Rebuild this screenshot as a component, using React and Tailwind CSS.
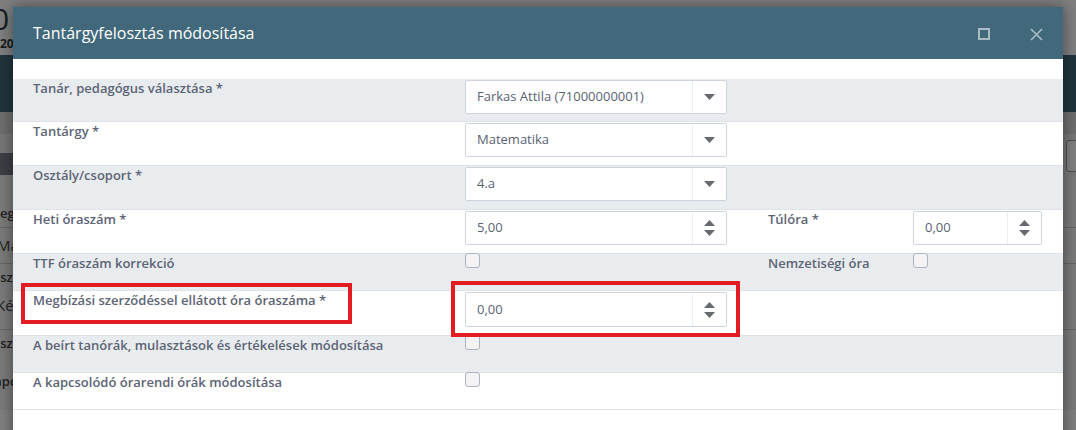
import { useState } from "react";

function Caret() {
  return (
    <svg width="11" height="6" viewBox="0 0 11 6">
      <path d="M0 0 H11 L5.5 6 Z" fill="#666a70" />
    </svg>
  );
}

function Spinner() {
  return (
    <div className="flex flex-col items-center gap-[4px]">
      <svg width="11" height="6" viewBox="0 0 11 6">
        <path d="M0 6 H11 L5.5 0 Z" fill="#666a70" />
      </svg>
      <svg width="11" height="6" viewBox="0 0 11 6">
        <path d="M0 0 H11 L5.5 6 Z" fill="#666a70" />
      </svg>
    </div>
  );
}

function Field({ value, kind = "select", width = "w-[262px]", height = "h-[34px]" }) {
  return (
    <div
      className={`${width} ${height} flex bg-white border border-[#cdd4dd] rounded-[2px]`}
    >
      <div className="flex-1 flex items-center pl-[11px] text-[13px] text-[#596273] truncate">
        {value}
      </div>
      <div className="w-[34px] flex items-center justify-center border-l border-[#eceff2]">
        {kind === "select" ? <Caret /> : <Spinner />}
      </div>
    </div>
  );
}

function Check() {
  return (
    <div className="w-[15px] h-[15px] -mt-[1px] rounded-[3px] border border-[#aab3bf] bg-[#f3f3f3]" />
  );
}

function Label({ children }) {
  return (
    <div className="text-[13px] leading-[18px] font-semibold text-[#5c6475]">
      {children}
    </div>
  );
}

function Row({ height, grey, children }) {
  return (
    <div
      className={`${height} ${grey ? "bg-[#e9ecef]" : "bg-white"} border-b border-[#dfe3e8] grid grid-cols-[432px_303px_145px_130px] px-[20px]`}
    >
      {children}
    </div>
  );
}

function BackgroundPage() {
  return (
    <div className="flex flex-col">
      <div className="h-[55px] bg-white pt-[1px]">
        <div className="text-[30px] leading-[36px] text-[#2f3d45] -ml-[8px]">
          0 <span className="ml-[40px]">Tantárgyfelosztás</span>
        </div>
        <div className="text-[12px] font-bold text-[#2f3d45] leading-[14px]">
          2024/2025
        </div>
      </div>
      <div className="h-[57px] bg-[#41697b]" />
      <div className="h-[22px] bg-[#dcdcdc]" />
      <div className="h-[41px] bg-[#eeeeee] flex justify-between">
        <div className="mt-[19px] w-[80px] h-[22px] bg-[#777f8b]" />
        <div className="mt-[6px] mr-[-22px] w-[32px] h-[32px] rounded-[3px] border border-[#9aa0a6] bg-white" />
      </div>
      <div className="bg-[#f5f5f5] text-[13px] text-[#444]">
        <div className="h-[53px] border-b border-[#cccccc] flex items-end pb-[4px] -ml-[12px] font-semibold">
          Megállapítás
        </div>
        <div className="h-[36px] border-b border-[#cccccc] flex items-center -ml-[3px] text-[15px]">
          Matematika
        </div>
        <div className="h-[66px] border-b border-[#cccccc] pt-[4px] -ml-[10px]">
          <div className="font-semibold">Osztály</div>
          <div className="text-[15px] mt-[6px] ml-[6px]">Kész</div>
        </div>
        <div className="h-[80px] pt-[4px] -ml-[10px]">
          <div className="font-semibold">Osztály</div>
          <div className="w-[14px] h-[14px] border border-[#888] rounded-[3px] ml-[-4px] mt-[2px]" />
          <div className="font-semibold mt-[2px] -ml-[4px]">Kapcsolat</div>
          <div className="w-[14px] h-[14px] border border-[#888] rounded-[3px] ml-[-4px] mt-[2px]" />
        </div>
      </div>
    </div>
  );
}

function Modal() {
  const [maxed, setMaxed] = useState(false);
  return (
    <div className="absolute left-[13px] top-[7px] w-[1050px] h-[440px] bg-white shadow-[0_0_14px_rgba(0,0,0,0.45)]">
      <div className="h-[52px] bg-[#41697b] flex items-center pl-[20px] pr-[20px]">
        <div className="flex-1 text-[16px] text-white">Tantárgyfelosztás módosítása</div>
        <button
          type="button"
          onClick={() => setMaxed(!maxed)}
          className="w-[12px] h-[12px] border-2 border-[#a9bdc7] mr-[40px] mt-[2px]"
        />
        <svg width="13" height="13" viewBox="0 0 13 13" className="mt-[2px]">
          <path d="M1 1 L12 12 M12 1 L1 12" stroke="#a9bdc7" strokeWidth="1.6" />
        </svg>
      </div>

      <div className="pt-[20px]">
        <Row height="h-[43px]" grey>
          <Label>Tanár, pedagógus választása *</Label>
          <div className="pt-[1px]">
            <Field value="Farkas Attila (71000000001)" />
          </div>
        </Row>
        <Row height="h-[44px]">
          <Label>Tantárgy *</Label>
          <div className="pt-[1px]">
            <Field value="Matematika" />
          </div>
        </Row>
        <Row height="h-[44px]" grey>
          <Label>Osztály/csoport *</Label>
          <div className="pt-[1px]">
            <Field value="4.a" />
          </div>
        </Row>
        <Row height="h-[44px]">
          <Label>Heti óraszám *</Label>
          <div className="pt-[1px]">
            <Field value="5,00" kind="number" />
          </div>
          <Label>Túlóra *</Label>
          <div className="pt-[1px]">
            <Field value="0,00" kind="number" width="w-[129px]" />
          </div>
        </Row>
        <Row height="h-[37px]" grey>
          <Label>TTF óraszám korrekció</Label>
          <div>
            <Check />
          </div>
          <Label>Nemzetiségi óra</Label>
          <div>
            <Check />
          </div>
        </Row>
        <Row height="h-[45px]">
          <div className="relative">
            <Label>Megbízási szerződéssel ellátott óra óraszáma *</Label>
            <div className="absolute -left-[12px] -top-[8px] w-[331px] h-[41px] border-4 border-[#e31b23]" />
          </div>
          <div className="relative pt-[1px]">
            <Field value="0,00" kind="number" height="h-[35px]" />
            <div className="absolute -left-[14px] -top-[10px] w-[289px] h-[56px] border-4 border-[#e31b23]" />
          </div>
        </Row>
        <Row height="h-[37px]" grey>
          <Label>A beírt tanórák, mulasztások és értékelések módosítása</Label>
          <div>
            <Check />
          </div>
        </Row>
        <Row height="h-[37px]">
          <Label>A kapcsolódó órarendi órák módosítása</Label>
          <div>
            <Check />
          </div>
        </Row>
      </div>
    </div>
  );
}

export default function App() {
  return (
    <div className="relative w-[1076px] h-[430px] overflow-hidden bg-white font-['Open_Sans',sans-serif]">
      <BackgroundPage />
      <div className="absolute inset-0 bg-black/50" />
      <Modal />
    </div>
  );
}
